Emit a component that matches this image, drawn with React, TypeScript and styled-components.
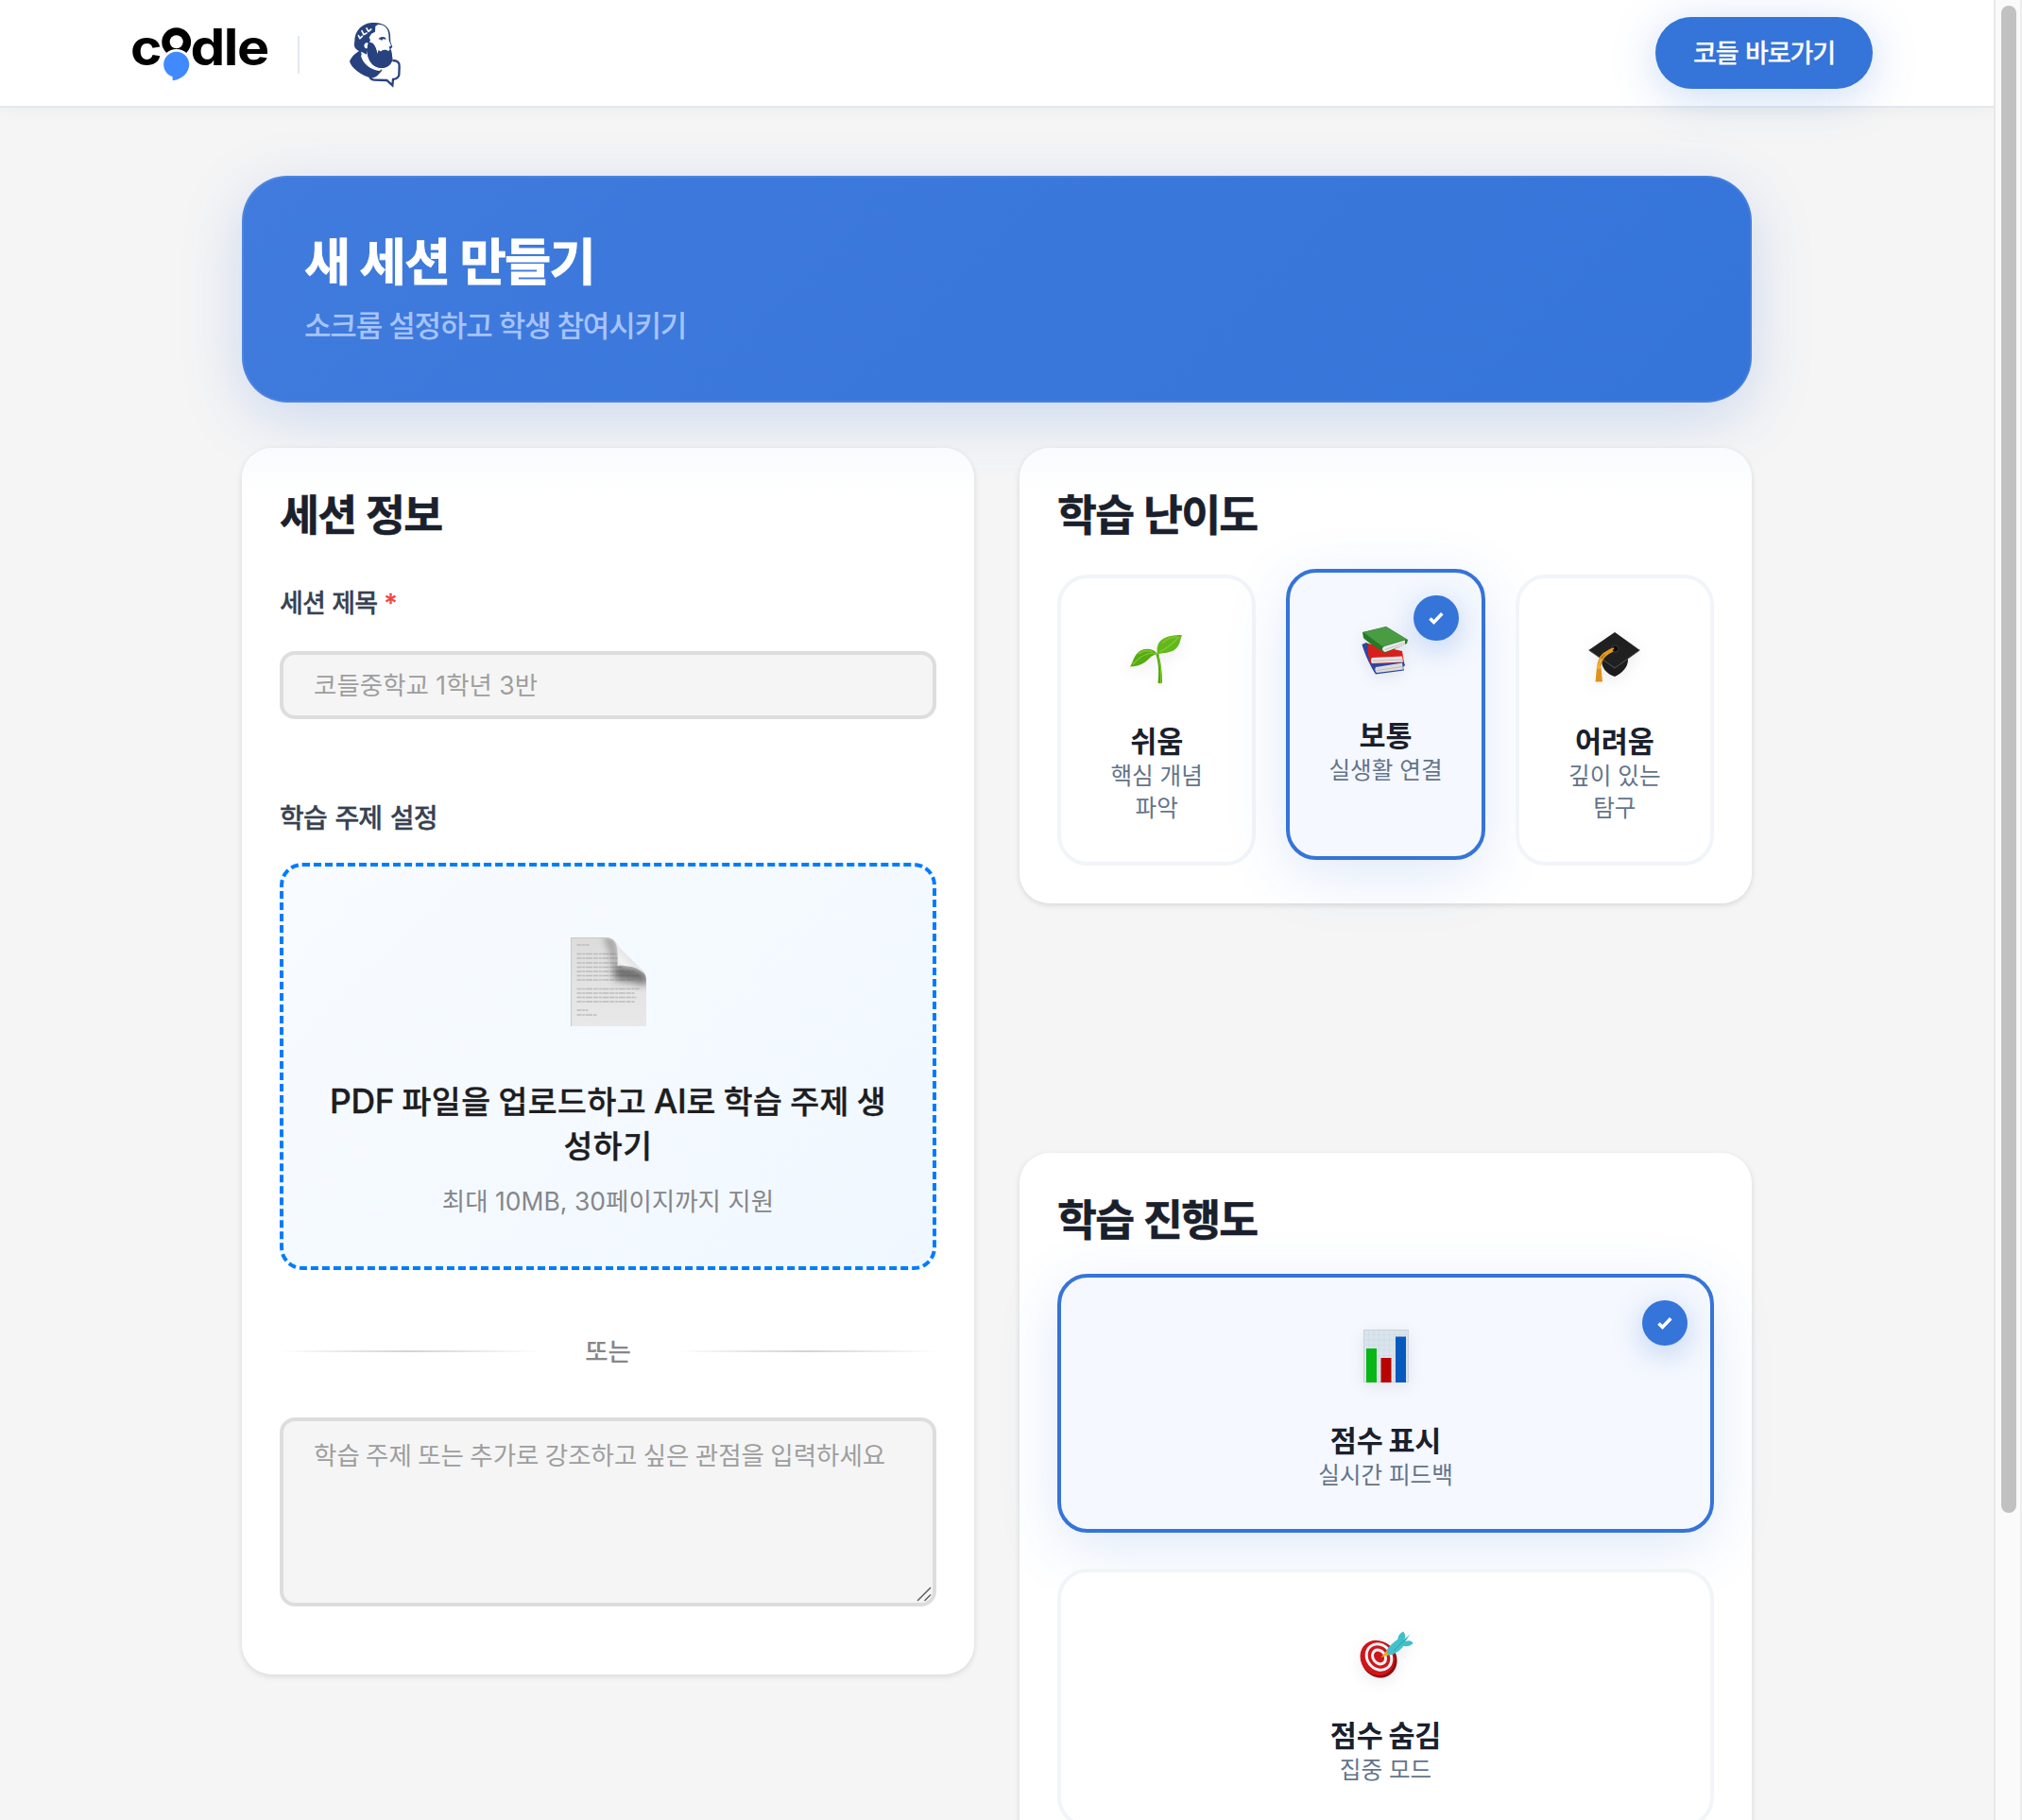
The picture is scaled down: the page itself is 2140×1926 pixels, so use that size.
import React from "react";
import styled, { createGlobalStyle, css } from "styled-components";

const BLUE = "#3574d9";
const FONT = `Inter, "Noto Sans CJK KR", sans-serif`;

const GlobalStyle = createGlobalStyle`
  *, *::before, *::after { box-sizing: border-box; }
  html, body { margin: 0; padding: 0; background: #f5f5f5; }
  body { font-family: ${FONT}; color: #1a202c; overflow: hidden; }
  h1, h2, h3, p { margin: 0; }
`;

const Window = styled.div`
  display: grid;
  grid-template-columns: minmax(0, 1fr) 30px;
  height: 1926px;
  overflow: hidden;
`;

const Page = styled.div`
  height: 1926px;
  overflow: hidden;
  background: #f5f5f5;
`;

const ScrollTrack = styled.div`
  display: flex;
  justify-content: center;
  padding-top: 6px;
  background: #fafafa;
  border-left: 2px solid #e8e8e8;
  border-right: 2px solid #ededed;
`;

const ScrollThumb = styled.div`
  width: 16px;
  height: 1595px;
  margin-left: 2px;
  border-radius: 8px;
  background: #c1c1c1;
`;

const Header = styled.header`
  display: flex;
  align-items: center;
  height: 114px;
  padding: 0 128px 0 140px;
  background: #fff;
  border-bottom: 2px solid #e2e8f0;
  box-shadow: 0 2px 16px rgba(0, 0, 0, 0.04);
`;

const Divider = styled.span`
  width: 2px;
  height: 40px;
  margin: 4px 43px 0 31px;
  background: #e2e8f0;
`;

const HeaderButton = styled.button`
  display: flex;
  align-items: center;
  justify-content: center;
  width: 230px;
  height: 76px;
  margin-left: auto;
  padding: 2px 0 0;
  border: 0;
  border-radius: 38px;
  background: ${BLUE};
  box-shadow: 0 8px 48px rgba(53, 116, 217, 0.25);
  color: #fff;
  font: 500 27px/40px ${FONT};
  letter-spacing: -1.1px;
  word-spacing: 1.4px;
  -webkit-text-stroke: 0.2px currentColor;
`;

const Main = styled.main`
  width: 1598px;
  margin: 72px auto 0;
`;

const Hero = styled.section`
  display: flex;
  flex-direction: column;
  justify-content: center;
  gap: 10px;
  height: 240px;
  padding: 0 66px;
  border-radius: 48px;
  background: linear-gradient(135deg, #407bdd 0%, #3574d9 100%);
  box-shadow: 0 16px 64px rgba(53, 116, 217, 0.22), inset 0 0 0 2px rgba(255, 255, 255, 0.08);
`;

const HeroTitle = styled.h1`
  color: #fff;
  font-size: 53.5px;
  font-weight: 700;
  line-height: 67px;
  letter-spacing: -1.7px;
  -webkit-text-stroke: 0.8px currentColor;
`;

const HeroSubtitle = styled.p`
  color: #a6c3ff;
  font-size: 31px;
  font-weight: 500;
  line-height: 48px;
  letter-spacing: -1.17px;
`;

const Columns = styled.div`
  display: grid;
  grid-template-columns: repeat(2, minmax(0, 1fr));
  align-items: start;
  gap: 48px;
  margin-top: 48px;
`;

const RightColumn = styled.div`
  display: flex;
  flex-direction: column;
  gap: 264px;
`;

const Card = styled.section<{ $underHero?: boolean }>`
  padding: 40px;
  border-radius: 32px;
  background: #fff;
  ${(p) =>
    p.$underHero &&
    css`
      background: linear-gradient(180deg, #f9fbfe 0, #fff 50px);
    `}
  box-shadow: 0 2px 6px rgba(0, 0, 0, 0.12);
`;

const FormCard = styled(Card)`
  height: 1298px;
`;

const CardTitle = styled.h2`
  padding-top: 1px;
  margin-bottom: 31px;
  font-size: 45.5px;
  font-weight: 700;
  line-height: 62px;
  letter-spacing: -1.7px;
  word-spacing: 1.6px;
  -webkit-text-stroke: 0.6px currentColor;
`;

const Label = styled.label<{ $large?: boolean }>`
  display: block;
  margin: ${(p) => (p.$large ? "84px 0 25px" : "41px 0 29px")};
  color: #374151;
  font-size: ${(p) => (p.$large ? 28 : 27)}px;
  font-weight: 500;
  line-height: ${(p) => (p.$large ? 43 : 42)}px;
  letter-spacing: -0.8px;
  word-spacing: ${(p) => (p.$large ? 1.8 : 0.8)}px;
  -webkit-text-stroke: 0.3px currentColor;
`;

const Required = styled.span`
  color: #ef4444;
`;

const fieldStyle = css`
  display: block;
  width: 100%;
  border: 4px solid #ddd;
  border-radius: 16px;
  background: #f5f5f5;
  font: 400 26.5px/40px ${FONT};
  outline: none;
  &::placeholder {
    color: #9e9e9e;
    opacity: 1;
  }
`;

const TextInput = styled.input`
  ${fieldStyle}
  height: 72px;
  padding: 0 32px;
`;

const TextAreaWrap = styled.div`
  position: relative;
`;

const TextArea = styled.textarea`
  ${fieldStyle}
  height: 200px;
  padding: 16px 32px;
  word-spacing: -1.1px;
  resize: none;
`;

const ResizeGrip = styled.svg`
  position: absolute;
  right: 5px;
  bottom: 5px;
`;

const UploadBox = styled.div`
  display: flex;
  flex-direction: column;
  align-items: center;
  height: 431px;
  padding-top: 75px;
  border: 4px dashed #007bff;
  border-radius: 24px;
  background: linear-gradient(135deg, #f8fbff 0%, #f0f8ff 100%);
  text-align: center;
`;

const UploadTitle = styled.p`
  margin-top: 57px;
  color: #1d1d1f;
  font-size: 33.5px;
  font-weight: 500;
  line-height: 46.8px;
  letter-spacing: 0.5px;
  word-spacing: -1.5px;
  -webkit-text-stroke: 0.4px currentColor;
`;

const Latin = styled.span`
  font-size: 35.5px;
  line-height: 1;
  letter-spacing: -0.2px;
`;

const UploadHint = styled.p`
  margin-top: 13px;
  color: #86868b;
  font-size: 26.5px;
  line-height: 42px;
`;

const OrRow = styled.div`
  display: flex;
  align-items: center;
  gap: 48px;
  margin: 66px 0 50px;
  color: #86868b;
  font-size: 26.5px;
  font-weight: 500;
  line-height: 40px;

  &::before,
  &::after {
    content: "";
    flex: 1;
    height: 2px;
    background: linear-gradient(90deg, transparent, #d2d2d7, transparent);
  }
`;

const Options = styled.div<{ $columns: number }>`
  display: grid;
  grid-template-columns: repeat(${(p) => p.$columns}, minmax(0, 1fr));
  gap: 32px;
`;

const OptionCard = styled.div<{ $selected?: boolean; $height: number }>`
  position: relative;
  display: flex;
  flex-direction: column;
  align-items: center;
  height: ${(p) => p.$height}px;
  padding: 52px 36px 0;
  border: 4px solid #f1f5f9;
  border-radius: 32px;
  background: #fff;
  text-align: center;
  word-break: keep-all;
  ${(p) =>
    p.$selected &&
    css`
      border-color: ${BLUE};
      background: #f5f8fe;
      transform: translateY(-6px);
      box-shadow: 0 16px 64px rgba(53, 116, 217, 0.16);
    `}
`;

const OptionIcon = styled.svg`
  width: 64px;
  height: 64px;
  filter: drop-shadow(0 4px 8px rgba(0, 0, 0, 0.08));
`;

const OptionTitle = styled.h3`
  margin-top: 37px;
  font-size: 30.5px;
  font-weight: 700;
  line-height: 39px;
  letter-spacing: -0.15px;
  word-spacing: -1.2px;
`;

const OptionText = styled.p`
  margin-top: 1px;
  color: #64748b;
  font-size: 24.6px;
  line-height: 33.7px;
`;

const Badge = styled.span`
  position: absolute;
  top: 24px;
  right: 24px;
  display: grid;
  place-items: center;
  width: 48px;
  height: 48px;
  border-radius: 50%;
  background: ${BLUE};
  box-shadow: 0 8px 32px rgba(53, 116, 217, 0.3);
`;

const LogoText = styled.text`
  font-family: Inter, sans-serif;
  font-weight: 700;
  font-size: 53px;
`;

function CodleLogo() {
  return (
    <svg width="144" height="114" viewBox="140 0 144 114" overflow="visible" role="img" aria-label="codle">
      <LogoText x="138" y="69.6" textLength="33.5" lengthAdjust="spacingAndGlyphs">c</LogoText>
      <circle cx="186.7" cy="45.6" r="15.4" fill="#000" />
      <circle cx="186.7" cy="45.2" r="7" fill="#fff" />
      <circle cx="186.7" cy="69.4" r="16.4" fill="#fff" />
      <path d="M186.7 55.8a13.5 13.5 0 0 1 13.5 13.5c0 8-6.5 15.4-17.4 17l-.3-4.200c-5.5-1.7-9.3-6.6-9.3-12.8a13.5 13.5 0 0 1 13.5-13.5z" fill="#4089ff" />
      <LogoText x="201.4" y="69.6" textLength="36.8" lengthAdjust="spacingAndGlyphs">d</LogoText>
      <LogoText x="236.8" y="69.6" textLength="15.6" lengthAdjust="spacingAndGlyphs">l</LogoText>
      <LogoText x="251" y="69.6" textLength="34.2" lengthAdjust="spacingAndGlyphs">e</LogoText>
    </svg>
  );
}

function PhilosopherLogo() {
  return (
    <svg width="75" height="85" viewBox="0 -3 225 255" fill="#27427f">
      <path d="M106 27C78 27 48 44 46 84C45 93 43 100 48 108C52 114 60 117 70 121L84 128L88 108C78 112 72 98 80 92C86 88 90 94 92 92L96 82L92 74L99 62L111 56L112 38L120 33C142 32 152 46 154 64L155 84L162 100L155 104L158 112L153 118C146 112 136 112 130 119L122 114L118 126C114 112 110 102 102 93L92 90C86 108 84 128 92 142C100 158 110 170 132 171C152 170 166 156 166 140L163 118L160 110L166 104L160 88L159 66C158 42 138 26 106 27Z" />
      <path d="M90 88L104 92C112 100 116 112 119 128L128 120C136 112 148 112 154 120L163 122L166 142C164 160 150 171 132 171C108 170 96 156 90 140C84 124 84 106 90 88Z" />
      <path d="M121 79C128 71 137 70 144 75L146 80L136 79L132 84L128 80Z" />
      <path d="M66 114C66 140 90 170 134 176C124 192 112 202 98 203C68 194 36 172 30 150C38 132 50 122 66 114Z" />
      <path d="M72 122C80 152 104 168 132 176L124 180C94 176 72 156 66 132Z" fill="#fff" />
      <path d="M166 147C182 147 189 154 188 166L187 192C186 202 180 205 168 207L166 226L148 210L108 209C102 209 98 206 94 201" fill="none" stroke="#27427f" strokeWidth="7" />
      <g fill="none" stroke="#fff" strokeWidth="5" strokeLinecap="round">
        <path d="M58 68L63 77L70 70" />
        <path d="M69 53L75 65L84 60" />
        <path d="M84 45L90 55L98 48" />
      </g>
    </svg>
  );
}

function DocumentIcon() {
  const lines: [number, number][] = [
    [8, 13], [17.5, 42], [22, 44], [27, 43], [31.5, 48], [36, 62], [40.5, 66], [45, 60],
    [54.5, 66], [59, 61], [63.5, 63], [68, 61], [77, 12], [82, 21],
  ];
  return (
    <svg width="80" height="94" viewBox="0 0 80 94">
      <defs>
        <linearGradient id="paper" x1="0" y1="0" x2="0" y2="1">
          <stop offset="0" stopColor="#dcdcdc" />
          <stop offset="0.6" stopColor="#e4e4e4" />
          <stop offset="1" stopColor="#e8e8e8" />
        </linearGradient>
        <linearGradient id="curl" x1="0" y1="1" x2="0.7" y2="0.3">
          <stop offset="0" stopColor="#c9c9c9" />
          <stop offset="0.45" stopColor="#f2f2f2" />
          <stop offset="1" stopColor="#d8d8d8" />
        </linearGradient>
        <filter id="soft" x="-50%" y="-50%" width="200%" height="200%">
          <feGaussianBlur stdDeviation="4" />
        </filter>
        <clipPath id="sheet">
          <path d="M0 0H36C44 0 49 4 50 12L56 30L68 31C76 33 80 38 80 46V94H0Z" />
        </clipPath>
      </defs>
      <g clipPath="url(#sheet)">
        <rect width="80" height="94" fill="url(#paper)" />
        <g stroke="#bcbcbc" strokeWidth="1.4" strokeDasharray="5 0.8 3 0.7 7 0.9">
          {lines.map(([y, w]) => (
            <path key={y} d={`M6.5 ${y}h${w}`} />
          ))}
        </g>
        <path d="M40 -2C46 4 48 12 49 30L64 32C74 33 80 36 84 46L78 50C66 46 54 46 46 44C46 26 44 10 36 0Z" fill="#4d4d4d" opacity="0.8" filter="url(#soft)" />
      </g>
      <path d="M0.5 94V0.5H36C43 0.5 48 4 49.5 10" fill="none" stroke="#c8c8c8" />
      <path d="M46 4C50 9 50 18 49.5 30C60 29 72 31 79 40C77 37 76 34 73 32L52 11C50 8 48 5 46 4Z" fill="url(#curl)" />
    </svg>
  );
}

const sprout = (
  <>
    <path d="M34 27C37 38 38 48 38 58.5C36 59.5 35 59.5 33.5 58.5C35 47 34 37 31.5 29Z" fill="#4fa50d" />
    <path d="M34 30C36.5 39 37.2 48 36.5 58.5" stroke="#86cf2a" fill="none" />
    <path d="M33 28C29 22 19 21 13 26C8 30 7 37 4 41.5C14 41 19 38 23 34C27 30 29 29 33 28Z" fill="#55ab10" />
    <path d="M33 28C31 15 38 8 59 8C57 13 57 18 53 22C48 27 40 27 33 28Z" fill="#62b81a" />
    <path d="M31 27.5C22 26 14 31 7 39M35 26C42 23 50 16 56 10" stroke="#86c936" strokeWidth="1.2" fill="none" />
    <path d="M13 28C18 24 24 24 28 26M38 17C42 12 48 10 54 10" stroke="#7cc22a" strokeWidth="2" fill="none" />
  </>
);

const books = (
  <>
    <path d="M7.5 24L12 22L52 43L53 46L51 48L52 51.5L22 55.5C18 50 10 34 7.5 24Z" fill="#2c47a0" />
    <path d="M22 48L50 43.5L51 50.5L23 54C21 52 21 50 22 48Z" fill="#dcdcdc" />
    <path d="M14 23L50 31L52 43L17 44.5C14 38 13 30 14 23Z" fill="#d81f1b" />
    <path d="M18 38L50 36.5L51 42.5L18 44C16.5 42 16.5 40 18 38Z" fill="#e3e3e3" />
    <path d="M8 11L33 5L56 19L55 23L32 33C22 27 14 22 9 17Z" fill="#257a27" />
    <path d="M9 11L33 5.5L54.5 18.5L29 26Z" fill="#4a9c43" />
    <path d="M31 26L53 19.5L53 24L32 32C28.5 30.5 28 28 31 26Z" fill="#e9e9e9" />
    <path d="M32 29.5L53 22M19 41.5L50 40M23 51.5L50 47.5" stroke="#b9b9b9" strokeWidth="0.8" />
  </>
);

const gradCap = (
  <>
    <path d="M18 34C18 43 23 49 32 52C40 48 46 42 46 34V25H18Z" fill="#1b1b1b" />
    <path d="M4.5 24L32 5L58.5 24L32 43Z" fill="#202020" />
    <path d="M4.5 24L32 43L58.5 24" stroke="#555" strokeWidth="1" fill="none" />
    <ellipse cx="32" cy="22.5" rx="4" ry="3.5" fill="#0b0b0b" stroke="#555" strokeWidth="0.6" />
    <path d="M31 22C22 26 15 29 14 43M30 24.5C22 28 18 32 16 43" stroke="#e59a1c" strokeWidth="2" fill="none" />
    <path d="M13 42L17.5 42L19 57.5H11.5Z" fill="#df921b" />
    <circle cx="15" cy="42" r="2.2" fill="#f0b040" />
  </>
);

const barChart = (
  <>
    <rect x="8" y="3" width="48" height="56" fill="#dae4ec" />
    <path d="M8 8.5H56M8 14H56M8 19.5H56M8 25H56M8 30.5H56M8 36H56M8 41.5H56M8 47H56M8 52.5H56M13.5 3V59M19 3V59M24.5 3V59M30 3V59M35.5 3V59M41 3V59M46.5 3V59M52 3V59" stroke="#cbdae6" strokeWidth="0.6" />
    <rect x="8.5" y="3.5" width="47" height="55" fill="none" stroke="#cbd3da" />
    <rect x="11" y="23" width="11" height="36" fill="#06b715" />
    <rect x="26.5" y="33" width="11" height="26" fill="#b90404" />
    <rect x="42" y="10.5" width="11" height="48.5" fill="#0759be" />
  </>
);

const target = (
  <>
    <ellipse cx="24.5" cy="40" rx="18.5" ry="20" transform="rotate(-38 24.5 40)" fill="#8e0d10" />
    <ellipse cx="22.800" cy="38.500" rx="17.500" ry="19.300" transform="rotate(-38 22.800 38.500)" fill="#cf161b" />
    <g fill="none" stroke="#f7f3f3" strokeWidth="3" transform="rotate(-38 24.500 37.500)">
      <ellipse cx="24.5" cy="37.5" rx="12.5" ry="14.5" />
      <ellipse cx="24.5" cy="37.5" rx="6.4" ry="8" />
    </g>
    <path d="M26.5 38L34 29L39 34Z" fill="#e6ad16" />
    <path d="M32.5 32C33 27 41 21 47 17L53 22C49 29 42 35 35 35.5Z" fill="#45c0cb" />
    <path d="M46 22C42 17 47 12 50 10.5C52.5 13 53 17 51 19.5L57.5 13L52.5 21C56 19.5 59.5 20 60.5 23C57 26.5 52 27 48 25Z" fill="#3fbfc9" />
    <path d="M40 31L49 22L54 17" stroke="#2a98a4" strokeWidth="0.8" fill="none" />
  </>
);

interface OptionProps {
  icon: React.ReactNode;
  title: string;
  text: string;
  height: number;
  selected?: boolean;
}

function Option({ icon, title, text, height, selected }: OptionProps) {
  return (
    <OptionCard $selected={selected} $height={height}>
      {selected && (
        <Badge>
          <svg width="24" height="24" viewBox="-12 -12 24 24">
            <path d="M-6.5 0.5L-2.5 4.5L6.3 -4.7" fill="none" stroke="#fff" strokeWidth="3.6" />
          </svg>
        </Badge>
      )}
      <OptionIcon viewBox="0 0 64 64">{icon}</OptionIcon>
      <OptionTitle>{title}</OptionTitle>
      <OptionText>{text}</OptionText>
    </OptionCard>
  );
}

export default function App() {
  return (
    <>
      <GlobalStyle />
      <Window>
        <Page>
          <Header>
            <CodleLogo />
            <Divider />
            <PhilosopherLogo />
            <HeaderButton>코들 바로가기</HeaderButton>
          </Header>
          <Main>
            <Hero>
              <HeroTitle>새 세션 만들기</HeroTitle>
              <HeroSubtitle>소크룸 설정하고 학생 참여시키기</HeroSubtitle>
            </Hero>
            <Columns>
              <FormCard $underHero>
                <CardTitle>세션 정보</CardTitle>
                <Label>
                  세션 제목 <Required>*</Required>
                </Label>
                <TextInput placeholder="코들중학교 1학년 3반" />
                <Label $large>학습 주제 설정</Label>
                <UploadBox>
                  <DocumentIcon />
                  <UploadTitle>
                    <Latin>PDF</Latin> 파일을 업로드하고 <Latin>AI</Latin>로 학습 주제 생<br />
                    성하기
                  </UploadTitle>
                  <UploadHint>최대 10MB, 30페이지까지 지원</UploadHint>
                </UploadBox>
                <OrRow>또는</OrRow>
                <TextAreaWrap>
                  <TextArea placeholder="학습 주제 또는 추가로 강조하고 싶은 관점을 입력하세요" />
                  <ResizeGrip width="16" height="16" viewBox="0 0 16 16">
                    <path d="M1 15L15 1M8.5 15L15 8.5" stroke="#5f5f5f" strokeWidth="1.5" />
                  </ResizeGrip>
                </TextAreaWrap>
              </FormCard>
              <RightColumn>
                <Card $underHero>
                  <CardTitle>학습 난이도</CardTitle>
                  <Options $columns={3}>
                    <Option height={308} icon={sprout} title="쉬움" text="핵심 개념 파악" />
                    <Option height={308} icon={books} title="보통" text="실생활 연결" selected />
                    <Option height={308} icon={gradCap} title="어려움" text="깊이 있는 탐구" />
                  </Options>
                </Card>
                <Card>
                  <CardTitle>학습 진행도</CardTitle>
                  <Options $columns={1}>
                    <Option height={274} icon={barChart} title="점수 표시" text="실시간 피드백" selected />
                    <Option height={274} icon={target} title="점수 숨김" text="집중 모드" />
                  </Options>
                </Card>
              </RightColumn>
            </Columns>
          </Main>
        </Page>
        <ScrollTrack>
          <ScrollThumb />
        </ScrollTrack>
      </Window>
    </>
  );
}
